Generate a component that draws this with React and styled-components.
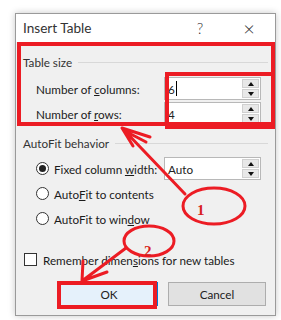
import React from "react";
import styled, { createGlobalStyle } from "styled-components";

const GlobalStyle = createGlobalStyle`
  html, body {
    margin: 0;
    padding: 0;
    background: #ffffff;
  }
  body {
    font-family: Lato, "Noto Sans", sans-serif;
    font-size: 11.7px;
    color: #1b1b1b;
  }
`;

const Page = styled.div`
  position: relative;
  width: 281px;
  height: 320px;
  padding: 13px 0 0 15px;
  box-sizing: border-box;
  overflow: hidden;
`;

const Dialog = styled.div`
  width: 261px;
  height: 303px;
  box-sizing: border-box;
  border: 1px solid #9a9a9a;
  background: #f0f0f0;
  box-shadow: 0 0 7px rgba(0, 0, 0, 0.22);
  display: flex;
  flex-direction: column;
`;

const TitleBar = styled.div`
  height: 28px;
  background: #ffffff;
  display: flex;
  align-items: center;
  padding: 0 3px 0 7px;
  font-size: 13.6px;
  color: #333;
`;

const Title = styled.span`
  flex: 1;
`;

const TitleButton = styled.span`
  width: ${(p) => p.$w}px;
  margin-right: ${(p) => p.$gap || 0}px;
  text-align: center;
  font-size: ${(p) => p.$size}px;
  font-weight: 300;
  color: #333;
`;

const Body = styled.div`
  flex: 1;
  display: flex;
  flex-direction: column;
  padding: 12px 7px 0 7px;
`;

const GroupHeader = styled.div`
  display: flex;
  align-items: center;
  gap: 6px;
  height: 16px;
  color: #333;
  margin-top: ${(p) => p.$top || 0}px;

  &::after {
    content: "";
    flex: 1;
    height: 1px;
    background: #d8d8d8;
  }
`;

const Row = styled.div`
  display: flex;
  align-items: center;
  height: 25px;
  padding-left: ${(p) => p.$indent || 13}px;
  margin-top: ${(p) => p.$top || 0}px;
`;

const Label = styled.span`
  flex: 1;
  white-space: nowrap;
`;

const U = styled.span`
  text-decoration: underline;
`;

const Spinner = styled.div`
  width: 97px;
  height: 23px;
  box-sizing: border-box;
  border: 1px solid #b8b8b8;
  background: #fff;
  display: flex;
  margin-right: 7px;
`;

const SpinText = styled.div`
  flex: 1;
  display: flex;
  align-items: center;
  padding-left: 3px;
  color: #222;
`;

const Caret = styled.span`
  display: inline-block;
  width: 1.5px;
  height: 15px;
  background: #000;
  margin-left: 1px;
`;

const SpinButtons = styled.div`
  width: 17px;
  display: flex;
  flex-direction: column;
  gap: 1px;
  padding: 1px 1px 1px 0;
`;

const SpinButton = styled.div`
  flex: 1;
  background: #e8e8e8;
  border: 1px solid #d0d0d0;
  display: flex;
  align-items: center;
  justify-content: center;

  &::before {
    content: "";
    border-left: 3.5px solid transparent;
    border-right: 3.5px solid transparent;
    ${(p) => (p.$down ? "border-top" : "border-bottom")}: 4px solid #111;
  }
`;

const Radio = styled.span`
  width: 13px;
  height: 13px;
  box-sizing: border-box;
  border-radius: 50%;
  border: 1px solid #333;
  background: #fff;
  margin-right: 5px;
  display: flex;
  align-items: center;
  justify-content: center;

  &::after {
    content: "";
    width: 7px;
    height: 7px;
    border-radius: 50%;
    background: ${(p) => (p.$checked ? "#222" : "transparent")};
  }
`;

const Checkbox = styled.span`
  width: 13px;
  height: 13px;
  box-sizing: border-box;
  border: 1px solid #333;
  background: #fff;
  margin-right: 6px;
`;

const Buttons = styled.div`
  display: flex;
  justify-content: flex-end;
  gap: 10px;
  margin-top: 10px;
  padding-right: 2px;
`;

const Button = styled.div`
  width: 98px;
  height: 24px;
  box-sizing: border-box;
  display: flex;
  align-items: center;
  justify-content: center;
  border: 1px solid ${(p) => (p.$primary ? "#0078d7" : "#adadad")};
  background: ${(p) => (p.$primary ? "#e5f1fb" : "#e1e1e1")};
  color: #222;
`;

const Overlay = styled.svg`
  position: absolute;
  left: 0;
  top: 0;
  pointer-events: none;
`;

const RED = "#ec1c24";

const Annotations = () => (
  <Overlay width="281" height="320" viewBox="0 0 281 320">
    <g fill="none" stroke={RED} strokeWidth="4">
      <rect x="19" y="44" width="254" height="80" />
      <rect x="167" y="74" width="106" height="53" />
      <rect x="59" y="283" width="96" height="24" />
    </g>
    <g fill="none" stroke={RED} strokeWidth="3" strokeLinecap="round">
      <ellipse cx="214" cy="206" rx="31" ry="18" />
      <path d="M185 194 L122 128 M122 128 L150 137 M122 128 L133 146 M125 131 L146 142" />
      <ellipse cx="149" cy="241" rx="25" ry="15" />
      <path d="M126 248 L82 281 M82 281 L83 261 M82 281 L107 272" />
    </g>
    <g fill="#d81e1e" fontFamily="'Liberation Serif', serif" fontWeight="bold" fontSize="15">
      <text x="197" y="215">1</text>
      <text x="144" y="256">2</text>
    </g>
  </Overlay>
);

export default function App() {
  return (
    <>
      <GlobalStyle />
      <Page>
        <Dialog>
          <TitleBar>
            <Title>Insert Table</Title>
            <TitleButton $w={28} $gap={12} $size={15}>?</TitleButton>
            <TitleButton $w={46} $size={20}>×</TitleButton>
          </TitleBar>
          <Body>
            <GroupHeader>Table size</GroupHeader>
            <Row $top={6}>
              <Label>
                Number of <U>c</U>olumns:
              </Label>
              <Spinner>
                <SpinText>
                  6<Caret />
                </SpinText>
                <SpinButtons>
                  <SpinButton />
                  <SpinButton $down />
                </SpinButtons>
              </Spinner>
            </Row>
            <Row>
              <Label>
                Number of <U>r</U>ows:
              </Label>
              <Spinner>
                <SpinText>4</SpinText>
                <SpinButtons>
                  <SpinButton />
                  <SpinButton $down />
                </SpinButtons>
              </Spinner>
            </Row>
            <GroupHeader $top={9}>AutoFit behavior</GroupHeader>
            <Row $top={5}>
              <Radio $checked />
              <Label>
                Fixed column <U>w</U>idth:
              </Label>
              <Spinner>
                <SpinText>Auto</SpinText>
                <SpinButtons>
                  <SpinButton />
                  <SpinButton $down />
                </SpinButtons>
              </Spinner>
            </Row>
            <Row>
              <Radio />
              <Label>
                Auto<U>F</U>it to contents
              </Label>
            </Row>
            <Row>
              <Radio />
              <Label>
                AutoFit to win<U>d</U>ow
              </Label>
            </Row>
            <Row $indent={1} $top={16}>
              <Checkbox />
              <Label>
                Remember dimen<U>s</U>ions for new tables
              </Label>
            </Row>
            <Buttons>
              <Button $primary>OK</Button>
              <Button>Cancel</Button>
            </Buttons>
          </Body>
        </Dialog>
        <Annotations />
      </Page>
    </>
  );
}
